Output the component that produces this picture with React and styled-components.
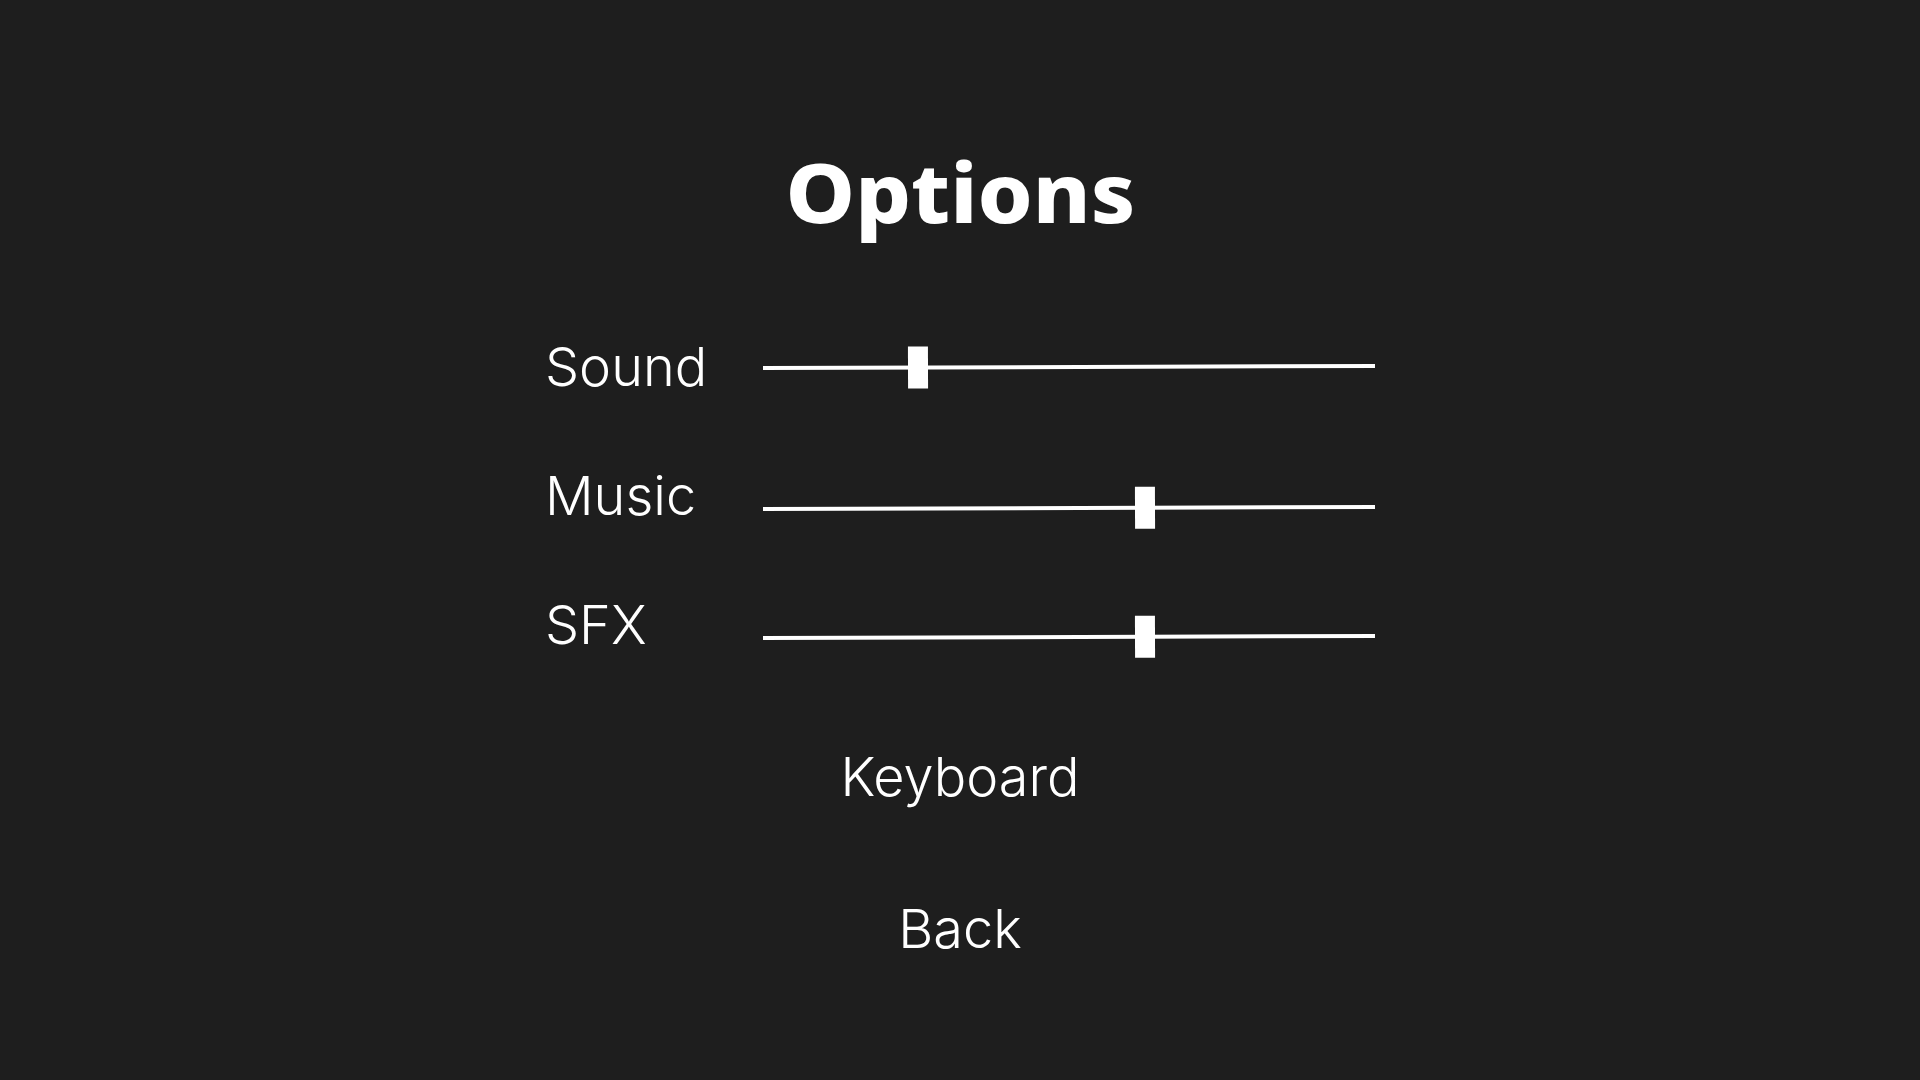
import React, { useState } from "react";
import styled, { createGlobalStyle } from "styled-components";

const GlobalStyle = createGlobalStyle`
  html, body {
    margin: 0;
    padding: 0;
    background: #1e1e1e;
  }
  body {
    font-family: Inter, "Noto Sans", sans-serif;
    color: #ffffff;
  }
`;

const Screen = styled.div`
  width: 1920px;
  height: 1080px;
  background: #1e1e1e;
  display: flex;
  flex-direction: column;
  align-items: center;
  padding-top: 150px;
  box-sizing: border-box;
  overflow: hidden;
`;

const Title = styled.h1`
  margin: 0;
  font-family: "Noto Sans", sans-serif;
  font-weight: 800;
  font-size: 82px;
  line-height: 82px;
  transform: scaleX(1.07);
  color: #ffffff;
`;

const SettingsGrid = styled.div`
  margin-top: 70px;
  display: grid;
  grid-template-columns: 218px 612px;
  grid-auto-rows: 129px;
`;

const Label = styled.div`
  display: flex;
  align-items: center;
  font-family: Inter, sans-serif;
  font-weight: 300;
  font-size: 54px;
  line-height: 54px;
  color: #ffffff;
`;

const SliderCell = styled.div`
  display: flex;
  align-items: center;
  padding-top: ${({ $offset }) => $offset * 2}px;
  box-sizing: border-box;
`;

const Track = styled.div`
  position: relative;
  width: 100%;
  height: 4px;
  background: #ffffff;
  transform: rotate(-0.18deg);
`;

const Thumb = styled.div`
  position: absolute;
  top: 50%;
  width: 20px;
  height: 42px;
  margin-top: -21px;
  background: #ffffff;
`;

const Menu = styled.div`
  margin-top: 61px;
  display: flex;
  flex-direction: column;
  align-items: center;
  gap: 98px;
`;

const MenuButton = styled.button`
  background: none;
  border: none;
  padding: 0;
  cursor: pointer;
  font-family: Inter, sans-serif;
  font-weight: 300;
  font-size: 54px;
  line-height: 54px;
  color: #ffffff;
`;

const TRACK_WIDTH = 612;
const THUMB_WIDTH = 20;

const Slider = ({ value, offset }) => (
  <SliderCell $offset={offset}>
    <Track>
      <Thumb style={{ left: `${(value / 100) * (TRACK_WIDTH - THUMB_WIDTH)}px` }} />
    </Track>
  </SliderCell>
);

export default function App() {
  const [values] = useState([
    { name: "Sound", value: 24.5, offset: -3 },
    { name: "Music", value: 62.8, offset: 12 },
    { name: "SFX", value: 62.8, offset: 12 },
  ]);

  return (
    <>
      <GlobalStyle />
      <Screen>
        <Title>Options</Title>
        <SettingsGrid>
          {values.map((v) => (
            <React.Fragment key={v.name}>
              <Label>{v.name}</Label>
              <Slider value={v.value} offset={v.offset} />
            </React.Fragment>
          ))}
        </SettingsGrid>
        <Menu>
          <MenuButton>Keyboard</MenuButton>
          <MenuButton>Back</MenuButton>
        </Menu>
      </Screen>
    </>
  );
}
